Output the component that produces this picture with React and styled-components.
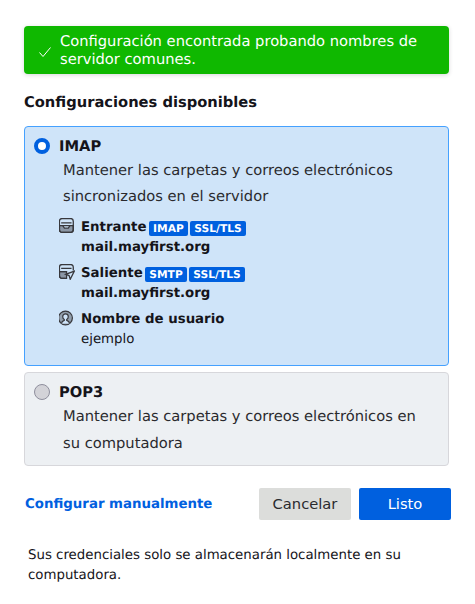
import styled, { createGlobalStyle } from 'styled-components'

const GlobalStyle = createGlobalStyle`
  html, body {
    margin: 0;
    background: #fff;
    font-family: "DejaVu Sans", sans-serif;
    color: #15141a;
    text-rendering: geometricPrecision;
  }
`

const Page = styled.div`
  width: 475px;
  height: 604px;
  box-sizing: border-box;
  padding: 26px 26px 0 24px;
  overflow: hidden;
`

const Notice = styled.div`
  display: flex;
  align-items: center;
  gap: 8px;
  width: 425px;
  height: 48px;
  box-sizing: border-box;
  padding: 2px 14px 0;
  border-radius: 4px;
  background: #0fb800;
  color: #fff;
  font-size: 14.7px;
  line-height: 18px;
  box-shadow: 0 1px 4px rgba(58, 57, 68, 0.2);
`

const Heading = styled.h2`
  margin: 20px 0 0;
  font-size: 14.7px;
  line-height: 18px;
  font-weight: 700;
`

const Options = styled.div`
  display: flex;
  flex-direction: column;
  gap: 6.4px;
  width: 425px;
  margin-top: 14px;
`

const Option = styled.div`
  box-sizing: border-box;
  height: ${p => p.$height}px;
  padding: 9px 9px 0;
  border: 1px solid ${p => (p.$selected ? '#45a1ff' : '#d7d7db')};
  border-radius: 4px;
  background: ${p => (p.$selected ? '#cfe4f9' : '#edf0f3')};
`

const OptionTitle = styled.div`
  display: flex;
  align-items: flex-start;
  gap: 9px;
  padding-top: 1px;
  font-size: 14.7px;
  line-height: 20px;
  font-weight: 700;
`

const Radio = styled.span`
  width: 16px;
  height: 16px;
  margin-top: 1px;
  box-sizing: border-box;
  border-radius: 50%;
  ${p =>
    p.$checked
      ? 'border: 4px solid #0060df; background: #fff;'
      : 'border: 1px solid #8f8f9d; background: #d3d3d8;'}
`

const Description = styled.p`
  margin: 1px 20px 0 29px;
  font-size: 14.7px;
  line-height: 26.4px;
  color: #2a2a2e;
`

const Details = styled.div`
  display: flex;
  flex-direction: column;
  gap: 6px;
  margin: 7.2px 0 0 25px;
`

const Detail = styled.div`
  display: grid;
  grid-template-columns: 16px 1fr;
  column-gap: 6px;
  font-size: 13.33px;
  line-height: 20px;
`

const DetailIcon = styled.svg`
  width: 16px;
  height: 16px;
  color: #38383d;
`

const DetailTitle = styled.div`
  display: flex;
  align-items: center;
  gap: 2.6px;
  font-weight: 700;
`

const DetailValue = styled.div`
  grid-column: 2;
  font-weight: ${p => (p.$plain ? 400 : 700)};
`

const Badge = styled.span`
  padding: 0 4px;
  height: 15px;
  border-radius: 2px;
  background: #0060df;
  color: #fff;
  font-size: 10.7px;
  line-height: 15px;
  font-weight: 700;
`

const Actions = styled.div`
  display: flex;
  align-items: center;
  margin-top: 22px;
  width: 427px;
`

const ManualLink = styled.a`
  margin-left: 1px;
  margin-right: auto;
  padding-top: 2px;
  color: #0060df;
  font-size: 13.33px;
  font-weight: 700;
`

const Button = styled.button`
  width: 92px;
  height: 32px;
  margin-left: 8px;
  padding: 0 0 1px;
  border: 0;
  border-radius: 2px;
  background: ${p => (p.$primary ? '#0060df' : '#dcdddb')};
  color: ${p => (p.$primary ? '#fff' : '#2a2a2e')};
  font-family: inherit;
  font-size: 14.7px;
`

const Footnote = styled.p`
  margin: 26px 0 0 4px;
  width: 410px;
  font-size: 13.33px;
  line-height: 20px;
  color: #15141a;
`

const InboxIcon = () => (
  <DetailIcon viewBox="1.2 1.1 14.8 14.8" fill="none" stroke="currentColor" strokeWidth="1.2">
    <rect x="1.6" y="1.6" width="12.8" height="12.8" rx="2.4" />
    <path d="M1.6 8.2h3.1l1.5 2.3h3.6l1.5-2.3h3.1v3.8a2.4 2.4 0 0 1-2.4 2.4H4a2.4 2.4 0 0 1-2.4-2.4z" fill="currentColor" fillOpacity="0.45" />
    <path d="M3.2 5.6h9.6M4.6 8.2h6.8" />
  </DetailIcon>
)

const OutboxIcon = () => (
  <DetailIcon viewBox="1.2 1.1 14.8 14.8" fill="none" stroke="currentColor" strokeWidth="1.2">
    <path d="M1.6 8.2h6.6v6.2H4A2.4 2.4 0 0 1 1.6 12z" fill="currentColor" fillOpacity="0.45" />
    <path d="M7 14.4H4a2.4 2.4 0 0 1-2.4-2.4V4A2.4 2.4 0 0 1 4 1.6h8A2.4 2.4 0 0 1 14.4 4v3" />
    <path d="M3.2 5.2h9.6M1.6 8.2h7" />
    <path d="M15.4 7.6 7.4 10.6l3.1 1.2 1.1 3.4z" fill="#cfe4f9" />
  </DetailIcon>
)

const UserIcon = () => (
  <DetailIcon viewBox="1.5 0 16 16" fill="none" stroke="currentColor" strokeWidth="1.2">
    <circle cx="8" cy="8" r="6.9" fill="currentColor" fillOpacity="0.4" />
    <path d="M4 13.4c.2-1.9 1.5-2.6 2.8-3v-.9C5.8 8.9 5.2 7.9 5.2 6.7 5.2 5 6.4 3.9 8 3.9s2.8 1.1 2.8 2.8c0 1.2-.6 2.2-1.6 2.8v.9c1.3.4 2.6 1.1 2.8 3" fill="#cfe4f9" />
  </DetailIcon>
)

const App = () => {
  return (
    <Page>
      <GlobalStyle />
      <Notice>
        <svg width="14" height="14" viewBox="0 0 14 14" fill="none" stroke="#fff" strokeWidth="1" style={{ flex: 'none', marginTop: 1 }}>
          <path d="M1.5 7.5l3.5 4L12.5 2.5" />
        </svg>
        <span>Configuración encontrada probando nombres de servidor comunes.</span>
      </Notice>
      <Heading>Configuraciones disponibles</Heading>
      <Options>
        <Option $selected $height={240}>
          <OptionTitle>
            <Radio $checked />
            IMAP
          </OptionTitle>
          <Description>Mantener las carpetas y correos electrónicos sincronizados en el servidor</Description>
          <Details>
            <Detail>
              <InboxIcon />
              <DetailTitle>
                Entrante <Badge>IMAP</Badge> <Badge>SSL/TLS</Badge>
              </DetailTitle>
              <DetailValue>mail.mayfirst.org</DetailValue>
            </Detail>
            <Detail>
              <OutboxIcon />
              <DetailTitle>
                Saliente <Badge>SMTP</Badge> <Badge>SSL/TLS</Badge>
              </DetailTitle>
              <DetailValue>mail.mayfirst.org</DetailValue>
            </Detail>
            <Detail>
              <UserIcon />
              <DetailTitle>Nombre de usuario</DetailTitle>
              <DetailValue $plain>ejemplo</DetailValue>
            </Detail>
          </Details>
        </Option>
        <Option $height={93.6}>
          <OptionTitle>
            <Radio />
            POP3
          </OptionTitle>
          <Description>Mantener las carpetas y correos electrónicos en su computadora</Description>
        </Option>
      </Options>
      <Actions>
        <ManualLink>Configurar manualmente</ManualLink>
        <Button>Cancelar</Button>
        <Button $primary>Listo</Button>
      </Actions>
      <Footnote>Sus credenciales solo se almacenarán localmente en su computadora.</Footnote>
    </Page>
  )
}

export default App
